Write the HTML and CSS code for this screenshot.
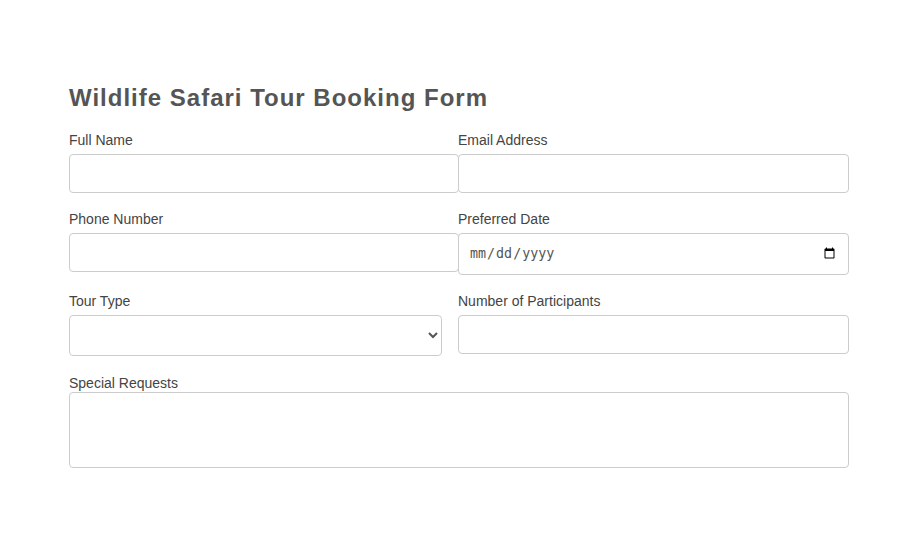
FILE: index.html
```html
<!DOCTYPE html>
<html>
<head>
<meta charset="utf-8">
<link rel="stylesheet" href="styles.css">
</head>
<body>
<div class="container">
  <h1 class="title">Wildlife Safari Tour Booking Form</h1>
  <form class="form">
    <div class="field">
      <label class="label">Full Name</label>
      <input class="input input-left" type="text">
    </div>
    <div class="field">
      <label class="label">Email Address</label>
      <input class="input" type="email">
    </div>
    <div class="field">
      <label class="label">Phone Number</label>
      <input class="input input-left" type="tel">
    </div>
    <div class="field">
      <label class="label">Preferred Date</label>
      <input class="input input-date" type="date">
    </div>
    <div class="field">
      <label class="label">Tour Type</label>
      <select class="input select"></select>
    </div>
    <div class="field">
      <label class="label">Number of Participants</label>
      <input class="input" type="number">
    </div>
    <div class="field field-wide">
      <label class="label label-tight">Special Requests</label>
      <textarea class="input textarea"></textarea>
    </div>
  </form>
</div>
</body>
</html>
```

FILE: styles.css
```css
html, body {
  margin: 0;
  padding: 0;
  background: #fff;
}
body {
  font-family: "Liberation Sans", Arial, sans-serif;
  color: #444;
}
.container {
  width: 780px;
  margin: 0 0 0 69px;
  padding-top: 84px;
}
.title {
  margin: 0 0 20px 0;
  font-size: 24px;
  line-height: 28px;
  font-weight: bold;
  letter-spacing: 1px;
  color: #555;
}
.form {
  display: grid;
  grid-template-columns: 389px 391px;
  row-gap: 18px;
  align-items: start;
}
.field {
  display: flex;
  flex-direction: column;
  align-items: flex-start;
}
.field-wide {
  grid-column: 1 / 3;
}
.label {
  display: block;
  font-size: 14px;
  line-height: 16px;
  margin-bottom: 6px;
  color: #444;
}
.label-tight {
  margin-top: 1px;
  margin-bottom: 1px;
}
.input {
  box-sizing: border-box;
  width: 391px;
  height: 39px;
  padding: 10px;
  border: 1px solid #ccc;
  border-radius: 4px;
  background: #fff;
  color: #555;
  margin: 0;
}
.input-left {
  width: 390px;
}
.input-date {
  height: 42px;
}
.select {
  width: 373px;
  height: 41px;
}
.textarea {
  width: 780px;
  height: 76px;
  resize: none;
}
```
